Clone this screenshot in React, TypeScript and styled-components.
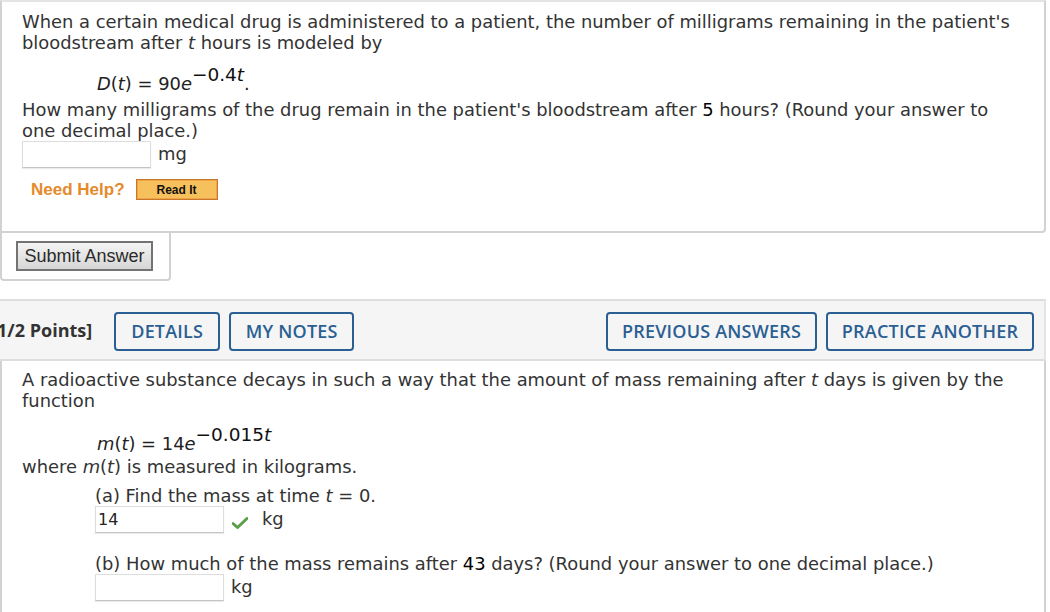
import styled, { createGlobalStyle } from 'styled-components';

const GlobalStyle = createGlobalStyle`
    body {
        margin: 0;
        background: #fff;
        font-family: 'DejaVu Sans', Verdana, sans-serif;
        color: #333;
    }
`;

const Page = styled.div`
    width: 1046px;
    overflow: hidden;
`;

const QuestionBox = styled.div`
    border: 2px solid #d2d2d2;
    border-top-color: #e4e4e4;
    border-radius: 0 0 4px 0;
    padding: 9px 20px 31px 20px;
    font-size: 17.9px;
    line-height: 21px;
`;

const Para = styled.div<{ $mt?: number }>`
    margin-top: ${(p) => p.$mt ?? 0}px;
`;

const Strong = styled.span`
    color: #000;
`;

const Formula = styled.div<{ $mt: number }>`
    margin-top: ${(p) => p.$mt}px;
    padding-left: 75px;
    height: 28px;
    line-height: 28px;
    color: #222;
`;

const Sup = styled.span`
    font-size: 18.5px;
    line-height: 1;
    vertical-align: 9px;
    color: #111;
`;

const Indent = styled.div`
    padding-left: 73px;
`;

const AnswerRow = styled.div<{ $mt?: number }>`
    display: flex;
    align-items: center;
    margin-top: ${(p) => p.$mt ?? 0}px;
    height: 27px;
`;

const AnswerInput = styled.div`
    box-sizing: border-box;
    width: 129px;
    height: 27px;
    border: 1px solid #ddd;
    border-bottom-color: #c4c4c4;
    box-shadow: 0 1px 1px rgba(0, 0, 0, 0.08);
    padding: 3px 2px;
    font-size: 16px;
    line-height: 19px;
    color: #222;
`;

const Unit = styled.span<{ $ml: number }>`
    margin-left: ${(p) => p.$ml}px;
    margin-top: -2px;
`;

const Check = styled.svg`
    margin-left: 8px;
    margin-top: 6px;
`;

const HelpRow = styled.div`
    display: flex;
    align-items: center;
    margin-top: 11px;
    padding-left: 9px;
    gap: 11px;
`;

const NeedHelp = styled.span`
    font-family: 'Liberation Sans', Arial, sans-serif;
    font-weight: bold;
    font-size: 17px;
    color: #e58a2b;
`;

const ReadIt = styled.button`
    box-sizing: border-box;
    width: 82px;
    height: 21px;
    padding: 0;
    background: #f6c15c;
    border: 1px solid #c7772d;
    box-shadow: inset 0 0 0 1px #f0a444;
    font-family: 'Liberation Sans', Arial, sans-serif;
    font-weight: bold;
    font-size: 12px;
    color: #111;
`;

const SubmitBox = styled.div`
    width: 171px;
    box-sizing: border-box;
    border: 2px solid #d2d2d2;
    border-top: none;
    border-radius: 0 0 4px 4px;
    padding: 8px 14px 8px 14px;
`;

const SubmitButton = styled.button`
    box-sizing: border-box;
    width: 137px;
    height: 30px;
    padding: 0;
    background: linear-gradient(#f4f4f4, #d6d6d6);
    border: 2px solid #737373;
    font-family: 'Liberation Sans', Arial, sans-serif;
    font-size: 18px;
    color: #2a2a2a;
`;

const HeaderBar = styled.div`
    margin-top: 18px;
    height: 58px;
    display: flex;
    align-items: center;
    background: #f5f5f5;
    border-top: 2px solid #dedede;
    border-bottom: 2px solid #dedede;
    border-right: 2px solid #e4e4e4;
    font-family: 'Open Sans', sans-serif;
`;

const Points = styled.span`
    margin-left: -3px;
    font-weight: 700;
    font-size: 18px;
    color: #333;
    margin-right: 22px;
`;

const Spacer = styled.div`
    flex: 1;
`;

const ActionButton = styled.button<{ $w: number }>`
    box-sizing: border-box;
    width: ${(p) => p.$w}px;
    height: 39px;
    margin-top: 2px;
    margin-right: 9px;
    padding: 0;
    background: transparent;
    border: 2px solid #2b5f93;
    border-radius: 4px;
    font-family: 'Open Sans', sans-serif;
    font-weight: 600;
    font-size: 18px;
    letter-spacing: 0.2px;
    color: #2b5f93;
    &:last-child {
        margin-right: 10px;
    }
`;

const ContentBox = styled.div`
    border-left: 2px solid #d2d2d2;
    border-right: 2px solid #d2d2d2;
    padding: 8px 20px 20px 20px;
    font-size: 17.9px;
    line-height: 21px;
`;

const CheckIcon = () => (
    <Check width="16" height="12" viewBox="0 0 16 12">
        <path d="M1 6.5 L5.5 10.5 L15 1.5" fill="none" stroke="#5aa047" strokeWidth="3" strokeLinecap="round" strokeLinejoin="round" />
    </Check>
);

const App = () => {
    return (
        <Page>
            <GlobalStyle />
            <QuestionBox>
                <Para>
                    When a certain medical drug is administered to a patient, the number of milligrams remaining in the patient's
                    bloodstream after <i>t</i> hours is modeled by
                </Para>
                <Formula $mt={13}>
                    <i>D</i>(<i>t</i>) = 90<i>e</i>
                    <Sup>
                        −0.4<i>t</i>
                    </Sup>
                    .
                </Formula>
                <Para $mt={5}>
                    How many milligrams of the drug remain in the patient's bloodstream after <Strong>5</Strong> hours? (Round your
                    answer to one decimal place.)
                </Para>
                <AnswerRow>
                    <AnswerInput />
                    <Unit $ml={7}>mg</Unit>
                </AnswerRow>
                <HelpRow>
                    <NeedHelp>Need Help?</NeedHelp>
                    <ReadIt>Read It</ReadIt>
                </HelpRow>
            </QuestionBox>
            <SubmitBox>
                <SubmitButton>Submit Answer</SubmitButton>
            </SubmitBox>
            <HeaderBar>
                <Points>1/2 Points]</Points>
                <ActionButton $w={106}>DETAILS</ActionButton>
                <ActionButton $w={125}>MY NOTES</ActionButton>
                <Spacer />
                <ActionButton $w={211}>PREVIOUS ANSWERS</ActionButton>
                <ActionButton $w={208}>PRACTICE ANOTHER</ActionButton>
            </HeaderBar>
            <ContentBox>
                <Para>
                    A radioactive substance decays in such a way that the amount of mass remaining after <i>t</i> days is given by the
                    function
                </Para>
                <Formula $mt={15}>
                    <i>m</i>(<i>t</i>) = 14<i>e</i>
                    <Sup>
                        −0.015<i>t</i>
                    </Sup>
                </Formula>
                <Para $mt={2}>
                    where <i>m</i>(<i>t</i>) is measured in kilograms.
                </Para>
                <Indent>
                    <Para $mt={8}>
                        (a) Find the mass at time <i>t</i> = 0.
                    </Para>
                    <AnswerRow>
                        <AnswerInput>14</AnswerInput>
                        <CheckIcon />
                        <Unit $ml={14}>kg</Unit>
                    </AnswerRow>
                    <Para $mt={20}>
                        (b) How much of the mass remains after <Strong>43</Strong> days? (Round your answer to one decimal place.)
                    </Para>
                    <AnswerRow>
                        <AnswerInput />
                        <Unit $ml={7}>kg</Unit>
                    </AnswerRow>
                </Indent>
            </ContentBox>
        </Page>
    );
};

export default App;
